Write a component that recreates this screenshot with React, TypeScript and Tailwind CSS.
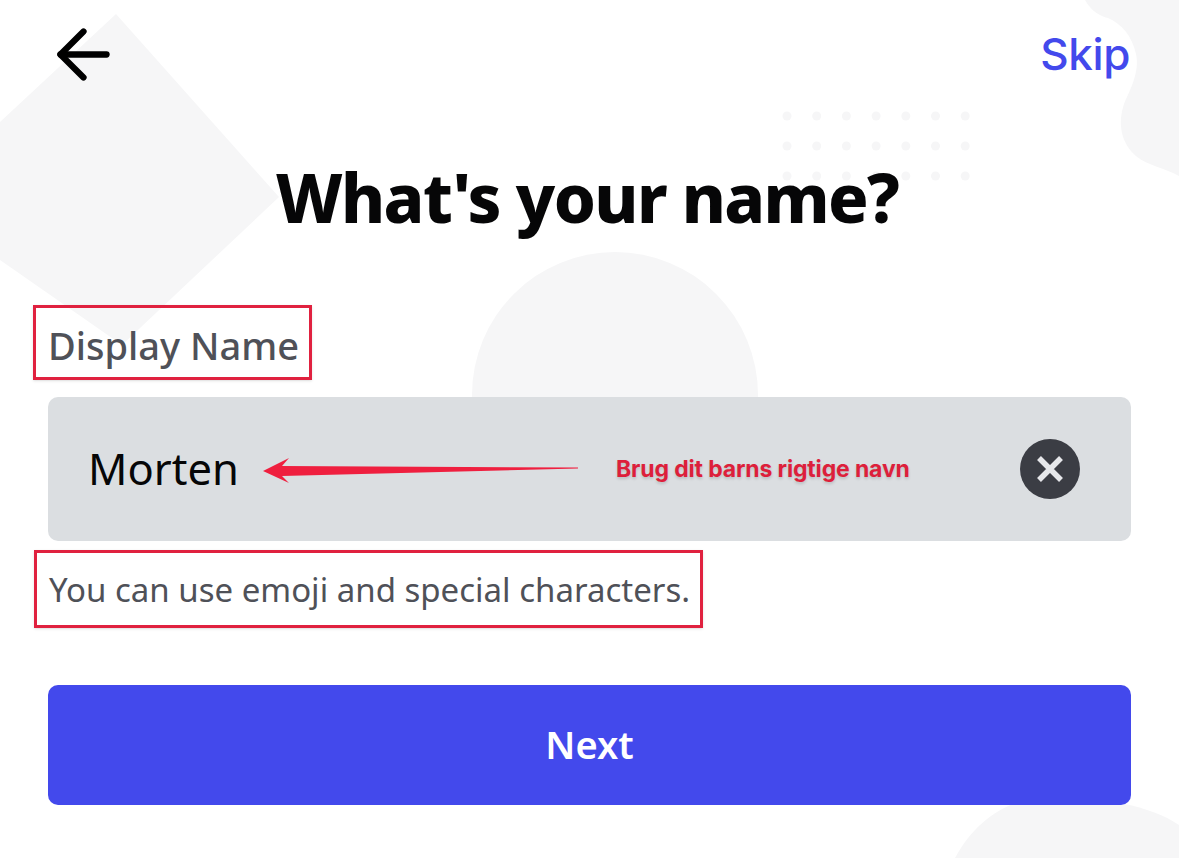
import React from "react";
import { ArrowLeft } from "lucide-react";

const dotRows = [0, 1, 2];
const dotCols = [0, 1, 2, 3, 4, 5, 6];

function Backdrop() {
  return (
    <svg className="absolute inset-0" width="1179" height="858" viewBox="0 0 1179 858" fill="#f6f6f7">
      <path d="M116 14 L279 197 L122 345 L0 260 L0 122 Z" />
      <circle cx="615" cy="395" r="143" />
      <path d="M1085 0 C1092 12 1100 16 1108 18 C1122 24 1132 36 1136 54 C1140 72 1130 90 1124 104 C1118 122 1120 142 1136 156 C1148 166 1165 168 1179 176 L1179 0 Z" />
      <path d="M955 858 C975 820 1010 797 1050 797 C1100 797 1150 805 1179 825 L1179 858 Z" />
      {dotRows.map((r) =>
        dotCols.map((c) => <circle key={`${r}-${c}`} cx={787 + c * 29.7} cy={116 + r * 30} r="4.5" />)
      )}
    </svg>
  );
}

export default function App() {
  return (
    <div className="relative w-[1179px] h-[858px] overflow-hidden bg-white font-['Noto_Sans',sans-serif]">
      <Backdrop />
      <div className="relative flex flex-col px-[48px]">
        <div className="flex items-center justify-between h-[54px] mt-[27px]">
          <ArrowLeft size={79} strokeWidth={1.9} className="text-black -ml-[4px] shrink-0" />
          <span className="text-[#4349ec] text-[44px] font-medium leading-none mr-[1px] font-['Inter',sans-serif] tracking-[-0.4px]">Skip</span>
        </div>
        <h1 className="mt-[76px] mb-[3px] pr-[5px] text-center text-[67px] leading-[80px] font-extrabold text-[#060607] tracking-[-1.6px]">What's your name?</h1>
        <div className="mt-[65px] -ml-[15px] w-[279px] h-[75px] flex items-center pl-[12px] border-[3px] border-[#e0213f] shadow-sm">
          <span className="text-[#4f5158] text-[38px] font-medium leading-none mt-[5px]">Display Name</span>
        </div>
        <div className="mt-[17px] h-[144px] rounded-[10px] bg-[#dbdee1] flex items-center pl-[40px] pr-[51px]">
          <span className="text-[#060607] text-[43.5px] leading-none w-[174px] shrink-0">Morten</span>
          <svg width="320" height="36" viewBox="0 0 320 36" className="-ml-[1px] shrink-0">
            <path d="M2 20 L28 7 L21 15 L317 16.5 L317 17.5 L21 25 L28 32 Z" fill="#ef1f3f" />
          </svg>
          <span className="ml-[35px] text-[#dd1f3b] text-[23px] font-bold font-['Inter',sans-serif] tracking-[-0.15px] leading-none [text-shadow:0_2px_3px_rgba(0,0,0,0.15)]">Brug dit barns rigtige navn</span>
          <button className="ml-auto w-[60px] h-[60px] rounded-full bg-[#3b3d44] flex items-center justify-center">
            <svg width="28" height="28" viewBox="0 0 28 28" stroke="#e6e7ea" strokeWidth="5.5">
              <path d="M3 3 L25 25 M25 3 L3 25" />
            </svg>
          </button>
        </div>
        <div className="mt-[9px] -ml-[14px] w-[669px] h-[78px] flex items-center pl-[12px] border-[3px] border-[#e0213f] shadow-sm">
          <span className="text-[#4f5158] text-[33px] leading-none">You can use emoji and special characters.</span>
        </div>
        <button className="mt-[57px] h-[120px] pb-[2px] rounded-[10px] bg-[#4349ec] text-white text-[38px] font-semibold flex items-center justify-center">Next</button>
      </div>
    </div>
  );
}
